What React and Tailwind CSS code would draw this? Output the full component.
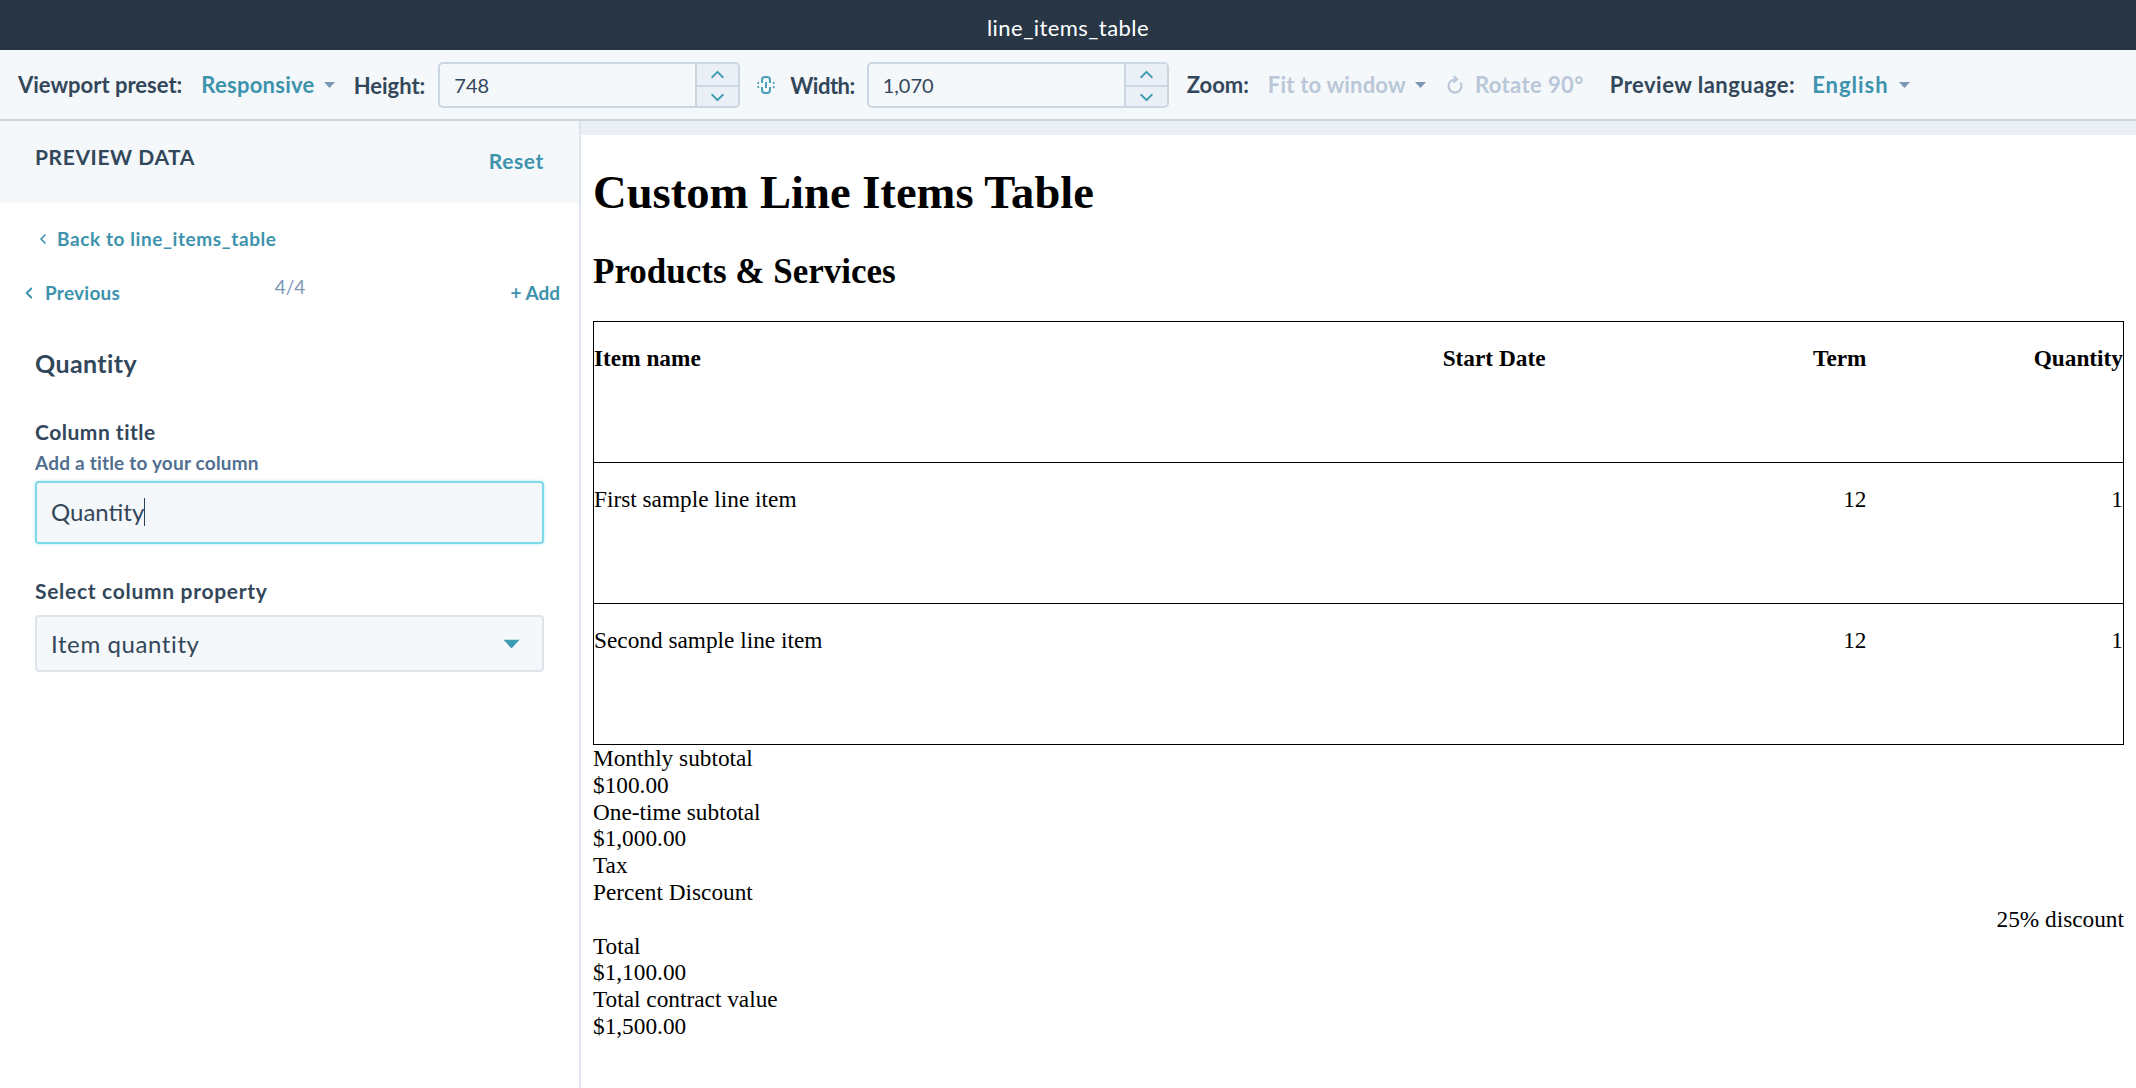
import React from "react";
import { ChevronUp, ChevronDown, ChevronLeft } from "lucide-react";

const sans = "font-['Lato','Noto_Sans',sans-serif]";

const Caret = ({ className }) => (
  <svg width="11" height="6" viewBox="0 0 11 6" className={className}>
    <path d="M0 0h11L5.5 6z" fill="currentColor" />
  </svg>
);

const Stepper = ({ value, className }) => (
  <div className={`flex h-[46px] rounded-[5px] border-2 border-[#cbd6e2] bg-[#f5f8fa] ${className}`}>
    <div className="flex flex-1 items-center pl-[14px] text-[20px] text-[#33475b]">{value}</div>
    <div className="flex w-[43px] flex-col rounded-r-[4px] border-l-2 border-[#cbd6e2] bg-[#eaf0f6] text-[#3d9bb3]">
      <div className="flex flex-1 items-center justify-center border-b-2 border-[#cbd6e2]">
        <ChevronUp size={21} strokeWidth={2.4} />
      </div>
      <div className="flex flex-1 items-center justify-center">
        <ChevronDown size={21} strokeWidth={2.4} />
      </div>
    </div>
  </div>
);

const LinkIcon = () => (
  <svg width="20" height="20" viewBox="0 0 20 20" className="text-[#4a9fb8]" fill="none" stroke="currentColor" strokeWidth="2">
    <path d="M6 8V5a3 3 0 0 1 3-3h2a3 3 0 0 1 3 3v3M6 12v3a3 3 0 0 0 3 3h2a3 3 0 0 0 3-3v-3M10 7v6" />
    <path d="M1.5 7.5l1.5.8M1.5 12.5l1.5-.8M18.5 7.5l-1.5.8M18.5 12.5l-1.5-.8" />
  </svg>
);

const RotateIcon = ({ className }) => (
  <svg width="18" height="20" viewBox="0 0 18 20" className={className} fill="none" stroke="currentColor" strokeWidth="2.2">
    <path d="M9 4.5a6.5 6.5 0 1 0 5.5 3" />
    <path d="M7.5 1l3.5 3.3L7.5 7.5" />
  </svg>
);

const rows = [
  { name: "First sample line item", term: "12", qty: "1" },
  { name: "Second sample line item", term: "12", qty: "1" },
];

const totals = [
  "Monthly subtotal",
  "$100.00",
  "One-time subtotal",
  "$1,000.00",
  "Tax",
  "Percent Discount",
];
const totalsEnd = ["Total", "$1,100.00", "Total contract value", "$1,500.00"];

const cellBase = "h-[141px] p-0 pt-[23px] align-top leading-[26px]";

export default function App() {
  return (
    <div className={`flex h-[1088px] flex-col overflow-hidden bg-white ${sans}`}>
      {/* title bar */}
      <div className="flex h-[50px] items-center justify-center bg-[#283646] pt-[4px] text-[22px] tracking-[0.45px] text-white">
        line_items_table
      </div>

      {/* toolbar */}
      <div className="flex h-[71px] items-center border-b-2 border-[#cbd6e2] bg-[#f5f8fa] pl-[18px] text-[22px]">
        <span className="font-bold text-[#33475b]">Viewport preset:</span>
        <span className="ml-[19px] font-bold tracking-[0.27px] text-[#3d93ad]">Responsive</span>
        <Caret className="ml-[9px] text-[#7c98b6]" />
        <span className="ml-[19px] mt-[2px] font-bold text-[#33475b]">Height:</span>
        <Stepper value="748" className="ml-[13px] w-[302px]" />
        <div className="ml-[16px]"><LinkIcon /></div>
        <span className="ml-[14px] mt-[2px] font-bold tracking-[-0.5px] text-[#33475b]">Width:</span>
        <Stepper value="1,070" className="ml-[12px] w-[302px]" />
        <span className="ml-[18px] font-bold text-[#33475b]">Zoom:</span>
        <span className="ml-[19px] font-bold tracking-[0.2px] text-[#b9c7d8]">Fit to window</span>
        <Caret className="ml-[9px] text-[#7c98b6]" />
        <RotateIcon className="ml-[20px] text-[#b9c7d8]" />
        <span className="ml-[11px] font-bold tracking-[0.4px] text-[#b9c7d8]">Rotate 90°</span>
        <span className="ml-[26px] font-bold tracking-[0.48px] text-[#33475b]">Preview language:</span>
        <span className="ml-[17px] font-bold tracking-[1px] text-[#3d93ad]">English</span>
        <Caret className="ml-[10px] text-[#7c98b6]" />
      </div>

      <div className="flex flex-1">
        {/* sidebar */}
        <aside className="w-[581px] shrink-0 border-r-2 border-[#dfe3eb]">
          <div className="flex h-[82px] items-start justify-between bg-[#f5f8fa] pl-[35px] pr-[35px]">
            <span className="mt-[20px] text-[21px] font-bold tracking-[0.6px] text-[#33475b]">PREVIEW DATA</span>
            <span className="mt-[24px] text-[21px] font-bold tracking-[0.6px] text-[#3d93ad]">Reset</span>
          </div>

          <div className="ml-[35px] mt-[22px] flex h-[28px] items-center text-[19px] font-bold tracking-[0.6px] text-[#3d93ad]">
            <ChevronLeft size={16} strokeWidth={2.5} className="mr-[6px]" />
            Back to line_items_table
          </div>

          <div className="mt-[26px] grid h-[28px] grid-cols-3 items-center pl-[20px] pr-[19px] text-[19px] font-bold text-[#3d93ad]">
            <div className="flex items-center tracking-[0.25px]">
              <ChevronLeft size={18} strokeWidth={2.5} className="mr-[7px]" />
              Previous
            </div>
            <div className="-mt-[12px] text-center font-normal text-[#7c98b6]">4/4</div>
            <div className="text-right">+ Add</div>
          </div>

          <div className="pl-[35px] pr-[35px]">
            <div className="mt-[40px] h-[32px] text-[25px] font-bold leading-[32px] tracking-[0.4px] text-[#33475b]">Quantity</div>
            <div className="mt-[40px] h-[26px] text-[21px] font-bold leading-[26px] tracking-[0.5px] text-[#33475b]">Column title</div>
            <div className="mt-[7px] h-[22px] text-[19px] font-bold leading-[22px] tracking-[0.2px] text-[#516f90]">Add a title to your column</div>
            <div className="mt-[7px] flex h-[63px] items-center rounded-[4px] border-2 border-[#7fd9e8] bg-[#f5f8fa] pb-[2px] pl-[14px] text-[24px] text-[#33475b] shadow-[0_0_3px_#a8e6f0]">
              Quantity
              <span className="h-[28px] w-px bg-[#33475b]" />
            </div>
            <div className="mt-[34px] h-[26px] text-[21px] font-bold leading-[26px] tracking-[0.7px] text-[#33475b]">Select column property</div>
            <div className="mt-[11px] flex h-[57px] items-center justify-between rounded-[4px] border-2 border-[#dfe3eb] bg-[#f5f8fa] pl-[14px] pr-[25px] text-[24px] tracking-[0.6px] text-[#33475b]">
              Item quantity
              <Caret className="scale-150 text-[#3d9bb3]" />
            </div>
          </div>
        </aside>

        {/* preview */}
        <main className="min-w-0 flex-1 font-['Liberation_Serif',serif] text-[23.3px] text-black">
          <div className="h-[14px] bg-[#eaf0f6]" />
          <div className="px-[12px]">
            <h1 className="mt-[32px] text-[46.6px] font-bold leading-[50px]">Custom Line Items Table</h1>
            <h2 className="mt-[36px] text-[35px] font-bold leading-[38px]">Products &amp; Services</h2>
            <table className="mt-[30px] w-full table-fixed border-collapse border border-black">
              <colgroup>
                <col className="w-[632px]" />
                <col className="w-[320px]" />
                <col className="w-[321px]" />
                <col />
              </colgroup>
              <thead>
                <tr className="border-b border-black">
                  <th className={`${cellBase} text-left`}>Item name</th>
                  <th className={`${cellBase} text-right`}>Start Date</th>
                  <th className={`${cellBase} text-right`}>Term</th>
                  <th className={`${cellBase} text-right`}>Quantity</th>
                </tr>
              </thead>
              <tbody>
                {rows.map((row) => (
                  <tr key={row.name} className="border-b border-black">
                    <td className={cellBase}>{row.name}</td>
                    <td className={cellBase}></td>
                    <td className={`${cellBase} text-right`}>{row.term}</td>
                    <td className={`${cellBase} text-right`}>{row.qty}</td>
                  </tr>
                ))}
              </tbody>
            </table>
            <div className="leading-[26.8px]">
              {totals.map((t) => (
                <div key={t}>{t}</div>
              ))}
              <div className="text-right">25% discount</div>
              {totalsEnd.map((t) => (
                <div key={t}>{t}</div>
              ))}
            </div>
          </div>
        </main>
      </div>
    </div>
  );
}
